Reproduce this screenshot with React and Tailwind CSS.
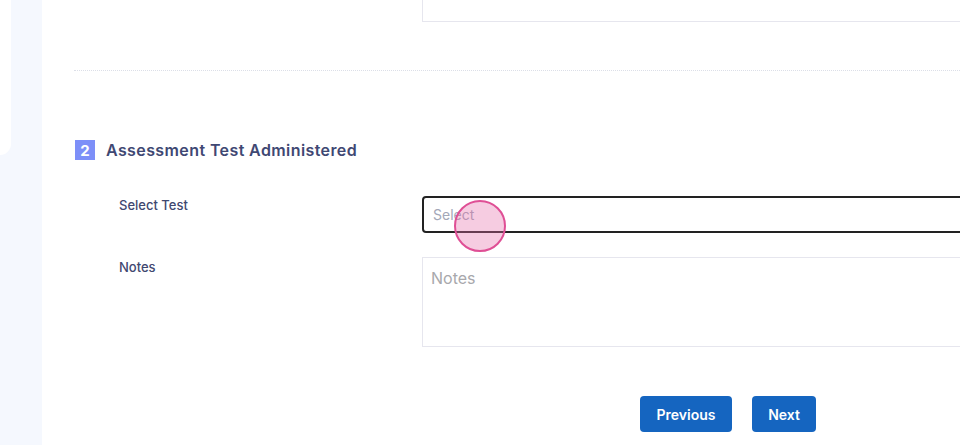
import React from "react";

export default function App() {
  return (
    <div className="relative flex h-[445px] w-[960px] overflow-hidden bg-white font-['Inter',sans-serif]">
      <aside className="w-[42px] shrink-0 bg-[#f5f8fe]">
        <div className="h-[155px] w-[11px] rounded-br-[14px] bg-white" />
      </aside>
      <main className="flex min-w-0 flex-1 flex-col pl-[32px]">
        <div className="flex">
          <div className="w-[348px] shrink-0" />
          <div className="h-[22px] w-[560px] shrink-0 border-x border-b border-[#e6e6ee] bg-white" />
        </div>
        <div className="mt-[48px] border-t border-dotted border-[#dcdfe8]" />
        <div className="ml-[1px] mt-[67px] flex items-center gap-[11px]">
          <span className="flex h-[20px] w-[20px] items-center justify-center bg-[#7d8ff8] text-[15px] font-bold leading-none text-white">2</span>
          <h2 className="text-[16px] font-semibold tracking-[0.4px] text-[#3f4873]">Assessment Test Administered</h2>
        </div>
        <div className="mt-[34px] flex">
          <div className="w-[348px] shrink-0 pl-[45px] text-[13px] font-medium text-[#3f4870]">Select Test</div>
          <div className="flex h-[37px] w-[560px] shrink-0 items-center rounded-[4px] border-2 border-[#222] px-[9px] text-[14px] text-[#a3a7b7]">Select</div>
        </div>
        <div className="mt-[24px] flex">
          <div className="w-[348px] shrink-0 pl-[45px] pt-[1px] text-[13px] font-medium text-[#3f4870]">Notes</div>
          <div className="h-[90px] w-[560px] shrink-0 border border-[#e6e6ee] px-[8px] pt-[8px] text-[16px] text-[#a8a8ac]">Notes</div>
        </div>
        <div className="mt-[49px] flex gap-[20px] pl-[566px]">
          <button className="h-[36px] w-[92px] rounded-[4px] bg-[#1565c0] text-[14px] font-semibold text-white">Previous</button>
          <button className="h-[36px] w-[64px] rounded-[4px] bg-[#1565c0] text-[14px] font-semibold text-white">Next</button>
        </div>
      </main>
      <div className="pointer-events-none absolute left-[454px] top-[200px] h-[52px] w-[52px] rounded-full border-2 border-[#df4f95] bg-[rgba(230,110,170,0.35)]" />
    </div>
  );
}
